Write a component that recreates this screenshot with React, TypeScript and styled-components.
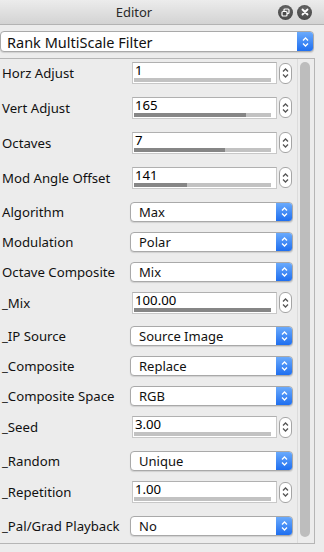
import React from "react";
import styled, { createGlobalStyle } from "styled-components";

const Global = createGlobalStyle`
  html, body { margin: 0; padding: 0; background: #ececec; }
  body { font-family: "Noto Sans", "DejaVu Sans", sans-serif; color: #111; }
  * { box-sizing: border-box; }
`;

const Window = styled.div`
  width: 324px;
  height: 552px;
  background: #ececec;
  overflow: hidden;
`;

const TitleBar = styled.div`
  height: 25px;
  display: flex;
  align-items: center;
  background: linear-gradient(#ececec, #d3d3d3);
  border-bottom: 1px solid #b3b3b3;
`;

const Title = styled.div`
  flex: 1;
  text-align: center;
  font-size: 13px;
  color: #2a2a2a;
`;

const TitleButtons = styled.div`
  width: 56px;
  display: flex;
  gap: 4px;
  padding-left: 10px;
`;

const RoundBtn = styled.div`
  width: 15px;
  height: 15px;
  border-radius: 50%;
  background: radial-gradient(circle at 50% 35%, #6d6d6d, #3e3e3e);
  display: flex;
  align-items: center;
  justify-content: center;
`;

const TopArea = styled.div`
  padding: 6px 0 6px 0;
  width: 314px;
`;

const Popup = styled.div<{ $big?: boolean }>`
  display: flex;
  align-items: stretch;
  height: ${(p) => (p.$big ? 21 : 20)}px;
  border-radius: 4px;
  background: #fff;
  border: 1px solid #a9a9a9;
  box-shadow: 0 1px 1px rgba(0, 0, 0, 0.12);
  overflow: hidden;
`;

const PopupText = styled.div<{ $big?: boolean }>`
  flex: 1;
  display: flex;
  align-items: center;
  padding-left: ${(p) => (p.$big ? 6 : 8)}px;
  font-size: ${(p) => (p.$big ? 14.5 : 13)}px;
  color: #111;
  white-space: nowrap;
`;

const PopupArrows = styled.div`
  width: 16px;
  background: linear-gradient(#6aaafc, #1f6ff0);
  display: flex;
  align-items: center;
  justify-content: center;
`;

const Box = styled.div`
  width: 315px;
  height: 486px;
  border-top: 1px solid #b5b5b5;
  border-right: 1px solid #b5b5b5;
  border-bottom: 1px solid #b5b5b5;
  display: flex;
`;

const Rows = styled.div`
  flex: 1;
  display: flex;
  flex-direction: column;
`;

const Row = styled.div<{ $num?: boolean }>`
  display: grid;
  grid-template-columns: 130px 1fr;
  height: ${(p) => (p.$num ? 35 : 30)}px;
  padding-top: 3px;
  align-items: start;
`;

const Label = styled.div<{ $num?: boolean }>`
  padding-left: 2px;
  font-size: 13.2px;
  line-height: ${(p) => (p.$num ? 22 : 20)}px;
  white-space: nowrap;
  color: #111;
`;

const NumWrap = styled.div`
  display: flex;
  align-items: center;
  gap: 2px;
  padding-left: 2px;
`;

const NumField = styled.div`
  width: 145px;
  height: 22px;
  background: #fff;
  border: 1px solid #c8c8c8;
  border-top-color: #b0b0b0;
  padding: 0 5px 1px 1px;
  display: flex;
  flex-direction: column;
  justify-content: space-between;
`;

const NumText = styled.div`
  font-size: 13.2px;
  line-height: 15px;
  color: #000;
  padding-left: 1px;
`;

const Track = styled.div`
  height: 4px;
  background: #c2c2c2;
`;

const Fill = styled.div`
  height: 100%;
  background: #868686;
`;

const Stepper = styled.div`
  width: 13px;
  height: 21px;
  border-radius: 6px;
  border: 1px solid #a5a5a5;
  background: #fff;
  display: flex;
  align-items: center;
  justify-content: center;
`;

const SelWrap = styled.div`
  width: 163px;
`;

const ScrollTrack = styled.div`
  width: 17px;
  border-left: 1px solid #dcdcdc;
  padding: 3px 4px 6px 2px;
  display: flex;
`;

const Thumb = styled.div`
  flex: 1;
  border-radius: 5px;
  background: #bdbdbd;
`;

const UpDown = ({ color, w = 7 }: { color: string; w?: number }) => (
  <svg width={w} height={12} viewBox="0 0 7 12">
    <path d="M1 4.5 L3.5 2 L6 4.5" fill="none" stroke={color} strokeWidth={1.3} />
    <path d="M1 7.5 L3.5 10 L6 7.5" fill="none" stroke={color} strokeWidth={1.3} />
  </svg>
);

type Item =
  | { kind: "num"; label: string; value: string; fill: number }
  | { kind: "sel"; label: string; value: string };

const items: Item[] = [
  { kind: "num", label: "Horz Adjust", value: "1", fill: 0 },
  { kind: "num", label: "Vert Adjust", value: "165", fill: 0.82 },
  { kind: "num", label: "Octaves", value: "7", fill: 0.665 },
  { kind: "num", label: "Mod Angle Offset", value: "141", fill: 0.385 },
  { kind: "sel", label: "Algorithm", value: "Max" },
  { kind: "sel", label: "Modulation", value: "Polar" },
  { kind: "sel", label: "Octave Composite", value: "Mix" },
  { kind: "num", label: "_Mix", value: "100.00", fill: 1 },
  { kind: "sel", label: "_IP Source", value: "Source Image" },
  { kind: "sel", label: "_Composite", value: "Replace" },
  { kind: "sel", label: "_Composite Space", value: "RGB" },
  { kind: "num", label: "_Seed", value: "3.00", fill: 0 },
  { kind: "sel", label: "_Random", value: "Unique" },
  { kind: "num", label: "_Repetition", value: "1.00", fill: 0 },
  { kind: "sel", label: "_Pal/Grad Playback", value: "No" },
];

export default function App() {
  return (
    <Window>
      <Global />
      <TitleBar>
        <Title>Editor</Title>
        <TitleButtons>
          <RoundBtn>
            <svg width="9" height="9" viewBox="0 0 9 9">
              <rect x="3" y="1" width="5" height="4.5" rx="1" fill="none" stroke="#fff" strokeWidth="1.2" />
              <rect x="1" y="3.5" width="5" height="4.5" rx="1" fill="#4a4a4a" stroke="#fff" strokeWidth="1.2" />
            </svg>
          </RoundBtn>
          <RoundBtn>
            <svg width="8" height="8" viewBox="0 0 8 8">
              <path d="M1.5 1.5 L6.5 6.5 M6.5 1.5 L1.5 6.5" stroke="#fff" strokeWidth="1.8" strokeLinecap="round" />
            </svg>
          </RoundBtn>
        </TitleButtons>
      </TitleBar>
      <TopArea>
        <Popup $big>
          <PopupText $big>Rank MultiScale Filter</PopupText>
          <PopupArrows>
            <UpDown color="#fff" />
          </PopupArrows>
        </Popup>
      </TopArea>
      <Box>
        <Rows>
          {items.map((it) =>
            it.kind === "num" ? (
              <Row $num key={it.label}>
                <Label $num>{it.label}</Label>
                <NumWrap>
                  <NumField>
                    <NumText>{it.value}</NumText>
                    <Track>
                      <Fill style={{ width: `${it.fill * 100}%` }} />
                    </Track>
                  </NumField>
                  <Stepper>
                    <UpDown color="#555" w={7} />
                  </Stepper>
                </NumWrap>
              </Row>
            ) : (
              <Row key={it.label}>
                <Label>{it.label}</Label>
                <SelWrap>
                  <Popup>
                    <PopupText>{it.value}</PopupText>
                    <PopupArrows>
                      <UpDown color="#fff" />
                    </PopupArrows>
                  </Popup>
                </SelWrap>
              </Row>
            )
          )}
        </Rows>
        <ScrollTrack>
          <Thumb />
        </ScrollTrack>
      </Box>
    </Window>
  );
}
